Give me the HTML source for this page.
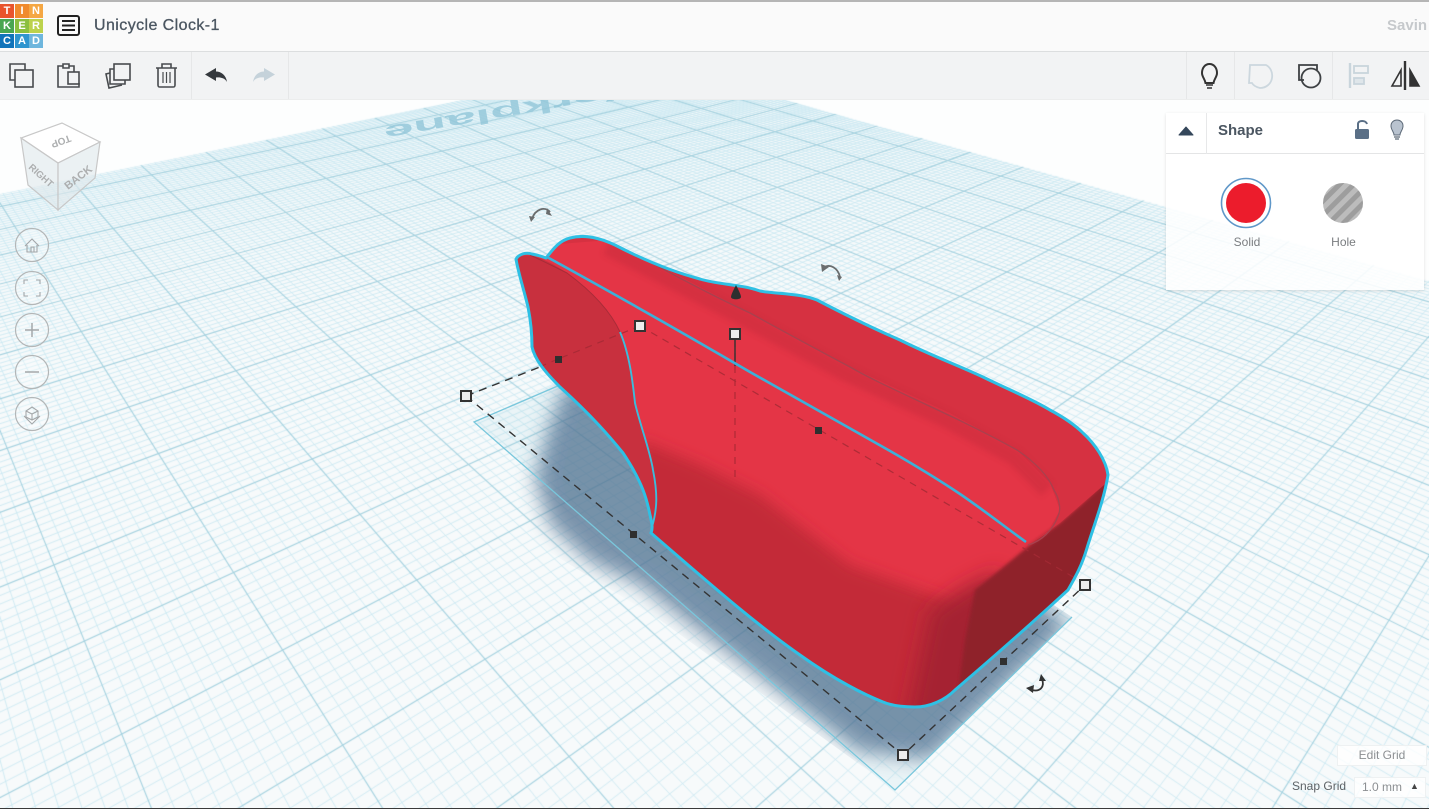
<!DOCTYPE html>
<html><head><meta charset="utf-8"><title>Unicycle Clock-1</title>
<style>
*{box-sizing:border-box}
html,body{margin:0;padding:0;width:1429px;height:809px;overflow:hidden;background:#fdfefe;font-family:"Liberation Sans",sans-serif}
#grid,#scene,#ui{position:absolute;left:0;top:0}
.t{position:absolute;white-space:nowrap}
.bar1{position:absolute;left:0;top:0;width:1429px;height:52px;background:#fafafa;border-top:2px solid #b5b5b5;border-bottom:1px solid #dcdedf}
.bar2{position:absolute;left:0;top:52px;width:1429px;height:48px;background:#f2f3f4;border-bottom:1px solid #eceded}
.sep{position:absolute;top:52px;width:1px;height:47px;background:#e6e7e8}
.cell{position:absolute;width:14px;height:14px;color:#fff;font:bold 11px/14px "Liberation Sans",sans-serif;text-align:center}
.panel{position:absolute;left:1166px;top:113px;width:258px;height:177px;background:rgba(255,255,255,.86);box-shadow:0 1px 3px rgba(0,0,0,.12)}
.phead{position:absolute;left:0;top:0;width:258px;height:41px;background:#fff;border-bottom:1px solid #e4e5e6}
.small{position:absolute;background:rgba(255,255,255,.8);border:1px solid #eef1f2}
</style></head>
<body>
<canvas id="grid" width="1429" height="809"></canvas>
<svg id="scene" width="1429" height="809" viewBox="0 0 1429 809" xmlns="http://www.w3.org/2000/svg">
<defs>
<filter id="b1" x="-20%" y="-20%" width="140%" height="140%"><feGaussianBlur stdDeviation="1.500"/></filter>
<filter id="b2" x="-20%" y="-20%" width="140%" height="140%"><feGaussianBlur stdDeviation="3"/></filter>
<filter id="b6" x="-30%" y="-30%" width="160%" height="160%"><feGaussianBlur stdDeviation="7"/></filter>
<filter id="b10" x="-30%" y="-30%" width="160%" height="160%"><feGaussianBlur stdDeviation="10"/></filter>
<path id="silP" d="M516 259C519 254 526 252 532 254C537 255 541 256 546 258C552 251 558 241 570 238C585 234 600 238 615 245C640 258 670 271 700 279C720 285 740 284 760 291C775 294 800 293 817 300C840 312 870 327 900 340C930 355 955 364 983 377C1005 388 1030 398 1050 410C1065 418 1075 425 1083 433C1095 444 1106 460 1108 475C1104 500 1094 525 1087 548C1082 565 1076 576 1068 590C1030 625 990 660 955 690C945 700 930 707 915 707C900 707 890 705 883 702C865 695 835 680 800 655C750 620 700 575 651 533C653 528 652 523 650 515C647 500 643 483 623 453C610 437 593 417 560 387C545 372 535 360 532 347C532 335 531 322 528 307C524 290 518 272 516 259Z"/>
<clipPath id="sil"><use href="#silP"/></clipPath>
<clipPath id="rect"><polygon points="474,422 650,340 1072,617 895,790 660,620 530,540 490,460"/></clipPath>
</defs>
<text transform="translate(383,127) rotate(170) scale(1,.38)" text-anchor="end" font-family="Liberation Sans" font-weight="bold" font-size="54" fill="#92c6d9" opacity=".8">Workplane</text>
<!-- shadow -->
<polygon points="474,422 895,790 1072,617 650,340" fill="#6fb8d0" opacity=".09"/>
<g clip-path="url(#rect)">
<polygon points="565,385 548,430 535,480 550,525 590,562 640,585 700,632 790,700 860,752 930,760 1070,625 900,500 700,370" fill="#4f7090" opacity=".74" filter="url(#b10)"/>
</g>
<path d="M560 385L474 422L895 790L1072 617" fill="none" stroke="#79c7dc" stroke-width="1.300"/>
<!-- dashed base -->
<g fill="none" stroke="#333" stroke-width="1.400" stroke-dasharray="8 6">
<path d="M466 396L903 755L1085 585"/>
<path d="M466 396L545 365"/>
</g>
<!-- body -->
<g clip-path="url(#sil)">
<rect x="500" y="220" width="620" height="500" fill="#e43546"/>
<polygon points="640,440 700,465 760,495 850,565 960,605 970,720 640,720" fill="#c32b39" filter="url(#b6)"/>
<polygon points="1000,570 960,590 930,612 905,730 950,730 1000,650" fill="#a52430" filter="url(#b10)"/>
<polygon points="1114,474 1083,503 1060,523 1030,545 975,590 965,640 955,715 1000,700 1100,600" fill="#8f2029" filter="url(#b1)"/>
<path d="M546 245L610 240L750 313L850 367L950 413L1017 450L1050 483L1060 510L1047 533L1028 545L1060 523L1083 503L1112 478L1120 440L1000 360L820 280L600 220Z" fill="#d63141"/>
<path d="M610 240L750 313L850 367L950 413L1017 450L1050 483" fill="none" stroke="#c42c3b" stroke-width="16" opacity=".45" filter="url(#b2)" transform="translate(-3,7)"/>
<path d="M516 259C526 252 540 255 567 273C590 290 610 310 620 332C630 360 633 385 635 403C640 425 650 450 653 470C658 495 657 510 652 527L647 512C640 480 610 437 560 387C535 362 532 350 532 347C532 320 520 280 516 259Z" fill="#c8303e"/>
<path d="M530 255C545 262 567 273 567 273C590 290 610 310 620 332" fill="none" stroke="#a92c38" stroke-width="1"/>
<path d="M610 240C650 262 700 290 750 313C790 335 850 367 850 367C890 390 950 413 1017 450C1035 462 1048 475 1054 490C1060 500 1061 510 1058 516C1053 530 1042 541 1028 545" fill="none" stroke="#a8414e" stroke-width="1.300"/>
<g fill="none" stroke="#a52a35" stroke-width="1.200" stroke-dasharray="7 6" opacity=".85">
<path d="M640 326L1075 578"/>
<path d="M640 326L558 359"/>
<path d="M735 340L735 478"/>
<path d="M558 359L530 371"/>
</g>
</g>
<path d="M735 340L735 366" stroke="#333" stroke-width="1.400"/>
<!-- cyan outlines -->
<use href="#silP" fill="none" stroke="#2fc0e4" stroke-width="3" stroke-linejoin="round"/>
<path d="M547 257C620 297 690 337 750 372C800 400 850 428 883 447C920 468 945 484 960 494C985 511 1005 527 1026 542" fill="none" stroke="#3cb0d8" stroke-width="2.600"/>
<path d="M620 332C630 355 633 385 635 403C640 425 650 450 653 470C658 495 657 510 652 527" fill="none" stroke="#3cbcdc" stroke-width="1.900"/>
<!-- handles -->
<g fill="#eeeeee" stroke="#333" stroke-width="2">
<rect x="461" y="391" width="10" height="10"/><rect x="635" y="321" width="10" height="10"/><rect x="730" y="329" width="10" height="10"/><rect x="898" y="750" width="10" height="10"/><rect x="1080" y="580" width="10" height="10"/>
</g>
<g fill="#2f2f2f">
<rect x="555" y="356" width="7" height="7"/><rect x="815" y="427" width="7" height="7"/><rect x="630" y="531" width="7" height="7"/><rect x="1000" y="658" width="7" height="7"/>
<path d="M736 285C733 291 731 295 731 297C731 300 741 300 741 297C741 295 739 291 736 285Z"/>
</g>
<!-- rotation arrows -->
<g fill="none" stroke="#6a6d6e" stroke-width="1.800">
<path d="M532 219C535 209 545 206 550 212"/>
<path d="M840 277C838 268 830 263 823 268"/>
</g>
<g fill="#6a6d6e"><path d="M529 216L535 217L531 222Z"/><path d="M547 208L552 216L546 214Z"/><path d="M821 264L829 267L822 272Z"/><path d="M837 275L842 277L839 281Z"/></g>
<path d="M1042 679C1045 687 1040 692 1032 690" fill="none" stroke="#333" stroke-width="1.800"/>
<path d="M1041 674L1046 681L1039 681Z M1026 688L1034 685L1033 693Z" fill="#333"/>
<!-- view cube -->
<g stroke="#c8c8c8" stroke-width="1.200" fill="rgba(255,255,255,.72)">
<polygon points="62,123 100,142 58,163 21,138"/>
<polygon points="21,138 58,163 58,210 28,185" fill="rgba(225,232,235,.62)"/>
<polygon points="58,163 100,142 95,178 58,210" fill="rgba(225,232,235,.62)"/>
</g>
<g font-family="Liberation Sans" fill="#adafb0" font-weight="bold">
<text transform="translate(61,141) rotate(160)" text-anchor="middle" dy="3" font-size="10">TOP</text>
<text transform="translate(28,168) rotate(42)" font-size="9.500">RIGHT</text>
<text transform="translate(68,190) rotate(-38)" font-size="11">BACK</text>
</g>
<!-- nav -->
<g fill="rgba(255,255,255,.28)" stroke="#b3b6b7" stroke-width="1.200">
<circle cx="32" cy="245" r="16.500"/><circle cx="32" cy="288" r="16.500"/><circle cx="32" cy="330" r="16.500"/><circle cx="32" cy="372" r="16.500"/><circle cx="32" cy="414" r="16.500"/>
</g>
<g fill="none" stroke="#a4a7a9" stroke-width="1.100">
<path d="M25 246L32 239L39 246M27 245V252H37V245M31 252V247H34V252"/>
<path d="M24 284V280H28M36 280H40V284M40 292V296H36M28 296H24V292"/>
<path d="M25 330H39M32 323V337" stroke-width="1.500"/>
<path d="M25 372H39" stroke-width="1.500"/>
<path d="M32 407L38 411V417L32 420L26 417V411ZM26 411L32 414L38 411M32 414V420M24 416L32 424L40 416"/>
</g>
</svg>

<div id="ui" style="width:1429px;height:809px">
<div class="bar1"></div><div class="bar2"></div>
<div class="cell" style="left:0;top:4px;background:#e9542c">T</div>
<div class="cell" style="left:15px;top:4px;background:#f08a2d">I</div>
<div class="cell" style="left:29px;top:4px;background:#f5a743">N</div>
<div class="cell" style="left:0;top:19px;background:#4aa651">K</div>
<div class="cell" style="left:15px;top:19px;background:#8bbf3f">E</div>
<div class="cell" style="left:29px;top:19px;background:#bcd24c">R</div>
<div class="cell" style="left:0;top:34px;background:#1073ba">C</div>
<div class="cell" style="left:15px;top:34px;background:#2f95cf">A</div>
<div class="cell" style="left:29px;top:34px;background:#6eb6dd">D</div>
<div class="t" style="left:94px;top:16px;font-size:16px;line-height:20px;color:#4b5661;letter-spacing:.42px;-webkit-text-stroke:.3px #4b5661">Unicycle Clock-1</div>
<div class="t" style="left:1387px;top:16px;font-size:15px;line-height:20px;color:#c6c9cc;font-weight:bold">Savin</div>
<div class="sep" style="left:191px"></div><div class="sep" style="left:288px"></div>
<div class="sep" style="left:1186px"></div><div class="sep" style="left:1234px"></div><div class="sep" style="left:1332px"></div>

<svg width="1429" height="100" viewBox="0 0 1429 100" style="position:absolute;left:0;top:0">
<g fill="none" stroke="#222" stroke-width="2"><rect x="58" y="16" width="21" height="19" rx="2"/><path d="M62 21H75M62 25.500H75M62 30H75"/></g>
<g fill="none" stroke="#484b4e" stroke-width="1.600">
<path d="M15 80H10V64H25V70"/><rect x="15" y="70" width="18" height="17"/>
<path d="M63 66H58V87H79V83M74 72V66H69M63 64H69V68H63Z"/><rect x="68" y="72" width="11" height="12"/>
<rect x="114" y="64" width="16" height="16"/><path d="M114 69H110V84H125V80"/><path d="M110 73L106 74L109 88L122 85"/>
<path d="M156 68H177M162 68V64H171V68M158 68V85C158 87 159 87 160 87H173C174 87 175 87 175 85V68"/>
<path d="M163 72V83M166.500 72V83M170 72V83" stroke-width="1.200"/>
<path d="M1202 73C1202 68 1205 64 1209.500 64C1214 64 1217 68 1217 73C1217 77 1214 79 1213.500 83H1205.500C1205 79 1202 77 1202 73Z" stroke-width="2" stroke="#333"/>
<path d="M1206 85H1213M1207 88H1212" stroke="#333" stroke-width="1.600"/>
</g>
<path d="M216 68L205 74.500L216 81V77.500C220 77 225 78 227 82C226 75 221 71.500 216 71.500Z" fill="#35393d"/>
<path d="M264 68L275 74.500L264 81V77.500C260 77 255 78 253 82C254 75 259 71.500 264 71.500Z" fill="#c5d2da"/>
<g fill="none" stroke="#ccd7de" stroke-width="1.800"><path d="M1250 65H1266C1270 67 1273 72 1272 78C1271 84 1266 88 1260 88C1256 87 1253 85 1252 83H1249Z"/></g>
<g fill="none" stroke="#3e4144" stroke-width="1.800"><path d="M1304 80H1299V65H1317V70"/><circle cx="1311" cy="78" r="9.500"/></g>
<g fill="none" stroke="#c9d5dc" stroke-width="1.800"><path d="M1350 63V88" stroke-width="2.400"/><rect x="1354" y="66" width="14" height="7"/><rect x="1354" y="78" width="10" height="6" fill="#dfe6ea"/></g>
<g stroke="#333" stroke-width="1.600"><path d="M1405 61V90" stroke-width="2.400"/><path d="M1401 70L1392 86H1401Z" fill="none"/><path d="M1410 70L1419 86H1410Z" fill="#333"/></g>
</svg>

<div class="panel">
<div class="phead"></div>
<div style="position:absolute;left:40px;top:0;width:1px;height:41px;background:#e7e8e9"></div>
<div class="t" style="left:52px;top:8px;font-size:15px;line-height:20px;font-weight:bold;color:#4b5661">Shape</div>
<div class="t" style="left:67px;top:122px;width:28px;text-align:center;font-size:12px;line-height:14px;color:#7a7d80">Solid</div>
<div class="t" style="left:164px;top:122px;width:27px;text-align:center;font-size:12px;line-height:14px;color:#7a7d80">Hole</div>
</div>
<svg width="1429" height="300" viewBox="0 0 1429 300" style="position:absolute;left:0;top:0">
<defs>
<pattern id="st" width="10" height="10" patternUnits="userSpaceOnUse" patternTransform="rotate(-45 1343 203)"><rect width="10" height="10" fill="#9d9d9d"/><rect width="10" height="5" fill="#bcbcbc"/></pattern>
</defs>
<path d="M1186 127L1193 135H1179Z" fill="#35475b" stroke="#35475b" stroke-width="1" stroke-linejoin="round"/>
<rect x="1355" y="129" width="14" height="10" rx="1.500" fill="#5a6f86"/>
<path d="M1358 129V124C1358 120 1366 120 1367 124" fill="none" stroke="#5a6f86" stroke-width="2"/>
<path d="M1391 126C1391 122 1394 120 1397 120C1400 120 1403 122 1403 126C1403 130 1400 132 1400 135H1394C1394 132 1391 130 1391 126Z" fill="#b9c3cf" stroke="#5d6a78" stroke-width="1"/>
<path d="M1394 137H1400M1395 139H1399" stroke="#5d6a78" stroke-width="1.200"/>
<circle cx="1246" cy="203" r="24.500" fill="#fff" stroke="#5f97c8" stroke-width="1.600"/>
<circle cx="1246" cy="203" r="20" fill="#ec1c2c"/>
<circle cx="1343" cy="203" r="24" fill="#fff"/>
<circle cx="1343" cy="203" r="20" fill="url(#st)"/>
</svg>

<div class="small" style="left:1337px;top:745px;width:90px;height:21px;text-align:center;font-size:12px;line-height:19px;color:#8c8f92">Edit Grid</div>
<div class="t" style="left:1292px;top:779px;font-size:12px;line-height:15px;color:#5d6266">Snap Grid</div>
<div class="small" style="left:1354px;top:777px;width:72px;height:21px;font-size:12px;line-height:19px;color:#8c8f92;padding-left:7px">1.0 mm<span style="position:absolute;left:55px;top:-1px;font-size:9px;color:#444">▲</span></div>
<div style="position:absolute;left:0;top:808px;width:1429px;height:1px;background:#3a3a3a"></div>
</div>

<script>
(function(){
var c=document.getElementById('grid').getContext('2d');
var C=[645,61],VA=[-249,-191],VB=[1892,-190],a=0.00304,b=0.00272,uP=7.6,vP=6.2;
function P(u,v){var w=1-a*u-b*v;return [(C[0]-a*u*VA[0]-b*v*VB[0])/w,(C[1]-a*u*VA[1]-b*v*VB[1])/w];}
c.fillStyle='#fdfefe';c.fillRect(0,0,1429,809);
c.save();
c.beginPath();c.moveTo(650,62);c.lineTo(3000,722);c.lineTo(3000,3000);c.lineTo(-3000,3000);c.lineTo(-3000,803);c.closePath();c.clip();
c.fillStyle='#f7fafb';c.fillRect(0,0,1429,809);
function line(u0,v0,u1,v1){var p=P(u0,v0),q=P(u1,v1);c.beginPath();c.moveTo(p[0],p[1]);c.lineTo(q[0],q[1]);c.stroke();}
function limV(u){return (0.97-a*u)/b;}
function limU(v){return (0.97-b*v)/a;}
function draw(major){
 c.strokeStyle=major?'#a3d1df':'#c6e7f1';
 c.lineWidth=major?1.100:0.800;
 for(var i=-10;i<=320;i++){
  var isM=((i%10)+10)%10===0;
  if(isM!==major)continue;
  var u=i+uP, v=i+vP;
  if(u>=-12&&limV(u)>-12)line(u,-12,u,limV(u));
  if(v>=-12&&limU(v)>-12)line(-12,v,limU(v),v);
 }
}
draw(false);draw(true);
c.restore();
})();
</script>
</body></html>
